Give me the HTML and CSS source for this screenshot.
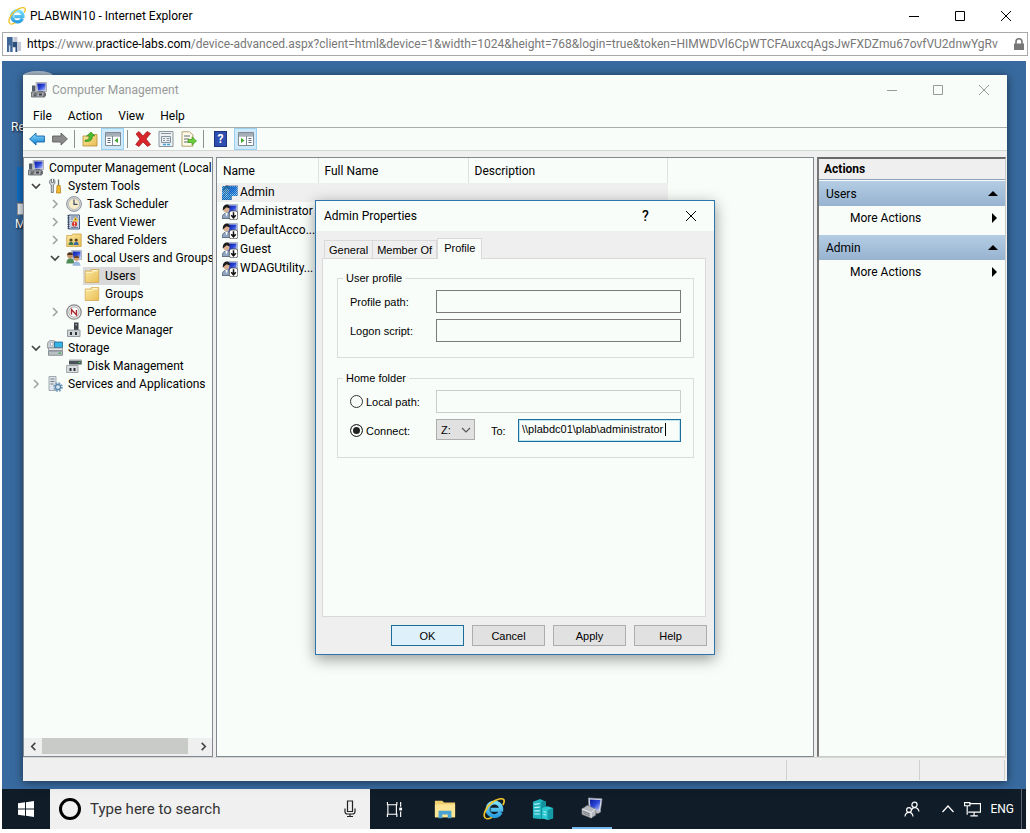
FILE: index.html
```
<!DOCTYPE html>
<html lang="en">
<head>
  <meta charset="UTF-8" />
  <meta name="viewport" content="width=device-width, initial-scale=1" />
  <title>PLABWIN10 - Internet Explorer</title>
  <link rel="stylesheet" href="styles.css">
</head>
<body>
  <!-- shared icons -->
  <svg class="sprite" aria-hidden="true">
    <defs>
      <linearGradient id="gScreen" x1="0" y1="0" x2="1" y2="1"><stop offset="0" stop-color="#0a1a9c"/><stop offset=".5" stop-color="#2b46d6"/><stop offset="1" stop-color="#b9c8ff"/></linearGradient>
      <linearGradient id="gFolder" x1="0" y1="0" x2="1" y2="1"><stop offset="0" stop-color="#fbe9a2"/><stop offset="1" stop-color="#e9bd52"/></linearGradient>
      <linearGradient id="gBlue" x1="0" y1="0" x2="0" y2="1"><stop offset="0" stop-color="#8fdcff"/><stop offset="1" stop-color="#0a7cd0"/></linearGradient>
      <linearGradient id="gCyan" x1="0" y1="0" x2="0" y2="1"><stop offset="0" stop-color="#7be0fa"/><stop offset="1" stop-color="#2a9fe0"/></linearGradient>
    </defs>
    <symbol id="i-ie" viewBox="0 0 22 22">
      <path d="M17.6 14.2A6.800 6.800 0 1 1 18.2 11.8H7.6" fill="none" stroke="url(#gCyan)" stroke-width="4"/>
      <path d="M2.6 20.4C-1 17.500 3 9 9 4.500C14 .8 19.500 -.2 20.800 1.800C21.600 3 21 5 19.800 7" fill="none" stroke="#f2c42c" stroke-width="1.700"/>
      <path d="M2.600 20.400C4.500 21.400 7 20.400 9 19.300" fill="none" stroke="#f2c42c" stroke-width="1.500"/>
    </symbol>
    <symbol id="i-computer" viewBox="0 0 16 16">
      <path d="M5 .5h10.500v9l-9.500 0z" fill="#d9d9e2" stroke="#888" stroke-width=".6"/>
      <path d="M6.200 1.500h8.300v7H7z" fill="url(#gScreen)"/>
      <path d="M1 3.500h3.500v6H1z" fill="#555d68"/>
      <path d="M8 9h4v2H8z" fill="#777"/>
      <path d="M.5 10h13v5H.5z" fill="#a9adb2" stroke="#5c6066" stroke-width=".8"/>
      <path d="M2.500 11.500h4v1h-4zM8 11.500h3v2H8zM2.500 13.300h3v1h-3z" fill="#3c4046"/>
      <path d="M12 15.400l3-1.400v-3l-2-1z" fill="#6a6e74"/>
    </symbol>
    <symbol id="i-computer-lg" viewBox="0 0 24 24">
      <path d="M8 1l15 1-2 14-12-2z" fill="#dfe3ec" stroke="#8b919d" stroke-width=".7"/>
      <path d="M9.500 2.600l11.800.8-1.500 10.800-9.300-1.500z" fill="url(#gScreen)"/>
      <path d="M10 12l4 3-1 3h6l3-2-2-1z" fill="#b4b8be"/>
      <path d="M1 13l6-4 9 4v7l-5 3-10-4z" fill="#b5b9bd" stroke="#6c7076" stroke-width=".6"/>
      <path d="M1 13l10 4 5-4M11 17v6" fill="none" stroke="#eceef0" stroke-width="1"/>
      <path d="M2.500 15.500l7 3M2.500 17.500l7 3" stroke="#6c7076" stroke-width=".9"/>
    </symbol>
    <symbol id="i-tools" viewBox="0 0 16 16">
      <path d="M4.500 1C2 2 2 6 4.300 7v7.500h2V7C8.500 6 8.500 2 6.500 1v3.500h-2z" fill="#d7dbde" stroke="#5b646b" stroke-width=".8"/>
      <path d="M11.500 1.500v6" stroke="#6a737a" stroke-width="1.300"/>
      <path d="M10 7.500h3.200l.5 7.500H9.500z" fill="#f1bb2e" stroke="#b27a10" stroke-width=".7"/>
    </symbol>
    <symbol id="i-clock" viewBox="0 0 16 16">
      <circle cx="8" cy="8" r="7.400" fill="#d9dde2" stroke="#8a8f96"/>
      <circle cx="8" cy="8" r="5.600" fill="#f7ecc8" stroke="#a5a9ae" stroke-width=".7"/>
      <path d="M8 3.500V8.300h3.500" fill="none" stroke="#3c4c66" stroke-width="1.200"/>
    </symbol>
    <symbol id="i-event" viewBox="0 0 16 16">
      <path d="M2.500 1h11v14h-11z" fill="#c7d3e2" stroke="#4d6485"/>
      <path d="M2.500 1v14" stroke="#33415a" stroke-width="2" stroke-dasharray="1.200 1"/>
      <path d="M5 5h2M5 7.500h1.500M5 13.500h7M11.500 5h1M5 3h7" stroke="#6a83a8"/>
      <path d="M9.500 2.500l3 5h-6z" fill="#f4c53a"/>
      <circle cx="8.500" cy="10" r="2.600" fill="#d5382c"/>
      <path d="M9.500 4.500v1.500" stroke="#6b4a00" stroke-width=".9"/>
      <path d="M8.500 8.500v1.800M8.500 11v.8" stroke="#fff" stroke-width=".9"/>
    </symbol>
    <symbol id="i-shared" viewBox="0 0 16 16">
      <path d="M.7 3.500h5l1-1.500h8.500V14.500H.7z" fill="url(#gFolder)" stroke="#c89b38" stroke-width=".7"/>
      <circle cx="5" cy="8" r="1.600" fill="#5a4426"/><circle cx="10.200" cy="8" r="1.600" fill="#5a4426"/>
      <path d="M2.500 13c0-4.500 5-4.500 5 0z" fill="#3a7c50"/><path d="M7.700 13c0-4.500 5-4.500 5 0z" fill="#356ca8"/>
    </symbol>
    <symbol id="i-users" viewBox="0 0 16 16">
      <path d="M5.500 .5h10v9H7z" fill="#dadfea" stroke="#8a90a0" stroke-width=".6"/>
      <path d="M6.500 1.500h8v7H7.600z" fill="url(#gScreen)"/>
      <circle cx="4" cy="5.500" r="2.800" fill="#c69164"/><path d="M1.200 5a2.800 2.800 0 0 1 5.600 0z" fill="#4b3222"/>
      <path d="M.3 13.500c0-7 8-7 8 0z" fill="#4f8b55"/>
      <circle cx="10.500" cy="8.500" r="2.500" fill="#d8a273"/><path d="M8 8a2.500 2.500 0 0 1 5 0z" fill="#6b4426"/>
      <path d="M6.500 15.700c0-5.700 8-5.700 8 0z" fill="#9ab6dc"/>
    </symbol>
    <symbol id="i-folder" viewBox="0 0 16 16">
      <path d="M1.200 3h6v-1.500h7.500V14.500H1.200z" fill="url(#gFolder)" stroke="#d0a44a" stroke-width=".7"/>
      <path d="M8.500 2.800h5" stroke="#fffbe8" stroke-width="1.200"/>
      <path d="M1.700 4.500h6l1.500-1" stroke="#fff3c4" fill="none"/>
    </symbol>
    <symbol id="i-perf" viewBox="0 0 16 16">
      <circle cx="8" cy="8" r="7.200" fill="#f4f4f4" stroke="#8a8a8a" stroke-width="1.300"/>
      <circle cx="8" cy="8" r="5.200" fill="#fff" stroke="#999" stroke-width=".8"/>
      <path d="M5.500 10.500V5.500l5 5.500V6" fill="none" stroke="#a8282d" stroke-width="1.400"/>
    </symbol>
    <symbol id="i-device" viewBox="0 0 16 16">
      <path d="M8 .5h4.500v8H8z" fill="#3d4348"/><path d="M9.500 2h1.500v1.500H9.500z" fill="#aab"/>
      <path d="M1.500 8h12.500v6.500h-12.500z" fill="#cfd3d6" stroke="#82888d" stroke-width=".8"/>
      <path d="M4 10h2v3H4zM9 10h2v3H9z" fill="#2d3236"/>
    </symbol>
    <symbol id="i-storage" viewBox="0 0 16 16">
      <path d="M.5 4c0-4.500 7-4.500 8-2v6H.5z" fill="#c9cfd4" stroke="#80878d" stroke-width=".7"/>
      <circle cx="4.800" cy="4" r="1.500" fill="#fff" stroke="#8a9298" stroke-width=".6"/>
      <path d="M7.500 2h8v5.500h-8z" fill="#35b5e6" stroke="#1c4f7c" stroke-width=".7"/>
      <path d="M1.500 8h14v2.500h-14z" fill="#e2e5e7" stroke="#80878d" stroke-width=".7"/>
      <path d="M1.500 11h14v4.300h-14z" fill="#b9c0c5" stroke="#6c7379" stroke-width=".7"/>
      <path d="M11.500 12.500h2.500v1.300h-2.500z" fill="#35b04a"/>
    </symbol>
    <symbol id="i-disk" viewBox="0 0 16 16">
      <path d="M3 2.500h12.700v4H3z" fill="#4a5156"/><path d="M3 1.500h12.700v1.300H3z" fill="#a5abb0"/>
      <path d="M12.500 4.500h2" stroke="#45d158"/>
      <path d="M.6 7.500h11.400v7H.6z" fill="#dcdfe1" stroke="#8a9095" stroke-width=".8"/>
      <path d="M3.500 10h2v3h-2zM7.500 10h2v3h-2z" fill="#2d3236"/>
    </symbol>
    <symbol id="i-services" viewBox="0 0 16 16">
      <path d="M2 .5h7v14H2z" fill="#dfe5ea" stroke="#8d979f" stroke-width=".8"/>
      <path d="M3.500 3h4M3.500 5.500h4M3.500 8h3" stroke="#6f7a83"/>
      <circle cx="11" cy="11" r="3.600" fill="none" stroke="#7ba0bf" stroke-width="2.400" stroke-dasharray="1.700 1.120"/>
      <circle cx="11" cy="11" r="2.500" fill="#dceaf5" stroke="#5f88ad" stroke-width="1.300"/>
    </symbol>
    <symbol id="i-person" viewBox="0 0 16 16">
      <path d="M5 .5h10.500v10H6z" fill="#dde2ee" stroke="#8a90a0" stroke-width=".6"/>
      <path d="M6.500 1.500h8v7.500h-8z" fill="url(#gScreen)"/>
      <circle cx="4.300" cy="5" r="3.200" fill="#d9b090"/><path d="M.8 6.500C0 -1 8.500 -1 7.700 4.500L4.500 3.200z" fill="#1d1a1c"/>
      <path d="M0 14.500c0-7.500 9.500-7.500 9.500 0z" fill="#8fa7c4" stroke="#3d4b60" stroke-width=".7"/><path d="M3.300 9l1.200 3.500L5.800 9z" fill="#fff"/>
    </symbol>
    <symbol id="i-user-off" viewBox="0 0 16 16">
      <use href="#i-person"/>
      <rect x="7.300" y="7" width="8.400" height="8.700" rx="2" fill="#fff" stroke="#333" stroke-width=".7"/>
      <path d="M11.500 8.300v5M9.200 11.300l2.300 2.500 2.300-2.500" fill="none" stroke="#111" stroke-width="1.500"/>
    </symbol>
    <pattern id="pSel" width="2" height="2" patternUnits="userSpaceOnUse"><path d="M0 0h1v1H0zM1 1h1v1H1z" fill="#0a6ec4"/></pattern>
    <symbol id="i-user-sel" viewBox="0 0 16 16">
      <use href="#i-person"/>
      <path d="M0 1h15.500v10h-5.500l-1 4H0z" fill="#58aee8" opacity=".5"/>
      <path d="M0 1h15.500v10h-5.500l-1 4H0z" fill="url(#pSel)"/>
    </symbol>
    <symbol id="i-min" viewBox="0 0 10 10"><path d="M0 5.500h10" stroke="currentColor" fill="none"/></symbol>
    <symbol id="i-max" viewBox="0 0 10 10"><path d="M.5.5h9v9h-9z" stroke="currentColor" fill="none"/></symbol>
    <symbol id="i-close" viewBox="0 0 10 10"><path d="M0 0l10 10M10 0L0 10" stroke="currentColor" fill="none"/></symbol>
    <symbol id="i-open" viewBox="0 0 10 10"><path d="M1 3l4 4 4-4" stroke="#444" stroke-width="1.700" fill="none"/></symbol>
    <symbol id="i-shut" viewBox="0 0 10 10"><path d="M3 1l4 4-4 4" stroke="#a0a0a0" stroke-width="1.500" fill="none"/></symbol>
    <symbol id="i-drop" viewBox="0 0 10 10"><path d="M1 3l4 4 4-4" stroke="#555" stroke-width="1.100" fill="none"/></symbol>
  </svg>

  <header class="titlebar">
    <svg class="ie-icon"><use href="#i-ie"/></svg>
    <h1>PLABWIN10 - Internet Explorer</h1>
    <div class="win-buttons">
      <button type="button" aria-label="Minimize"><svg><use href="#i-min"/></svg></button>
      <button type="button" aria-label="Maximize"><svg><use href="#i-max"/></svg></button>
      <button type="button" aria-label="Close"><svg><use href="#i-close"/></svg></button>
    </div>
  </header>

  <div class="address">
    <svg class="site-icon" viewBox="0 0 16 16"><path d="M0 0h6v16H0z" fill="#3f6797"/><path d="M6 5h5v11H9v-5H6z" fill="#2c4f7c"/><path d="M7 0h4v5H7zM11 5h4v10h-4z" fill="#c2c9d4"/><path d="M2 9h1.500v7H2z" fill="#c7d5e8"/></svg>
    <p class="url"><b>https</b>://www.<b>practice-labs.com</b>/device-advanced.aspx?client=html&amp;device=1&amp;width=1024&amp;height=768&amp;login=true&amp;token=HIMWDVl6CpWTCFAuxcqAgsJwFXDZmu67ovfVU2dnwYgRv</p>
    <svg class="lock" viewBox="0 0 10 13"><path d="M2 6V3.800a3 3 0 0 1 6 0V6" fill="none" stroke="#777" stroke-width="1.600"/><path d="M0 5.500h10V12H0z" fill="#777"/></svg>
  </div>

  <main class="desktop">
    <div class="shortcut bin"><span class="bin-lid"></span><span class="name">Re</span></div>
    <div class="shortcut edge"><span class="tile"></span><span class="arrow"></span><span class="name">M</span></div>

    <section class="console">
      <div class="console-title">
        <svg class="icon"><use href="#i-computer"/></svg>
        <h2>Computer Management</h2>
        <div class="win-buttons">
          <button type="button" aria-label="Minimize"><svg><use href="#i-min"/></svg></button>
          <button type="button" aria-label="Maximize"><svg><use href="#i-max"/></svg></button>
          <button type="button" aria-label="Close"><svg><use href="#i-close"/></svg></button>
        </div>
      </div>

      <nav class="menu">
        <button type="button">File</button>
        <button type="button">Action</button>
        <button type="button">View</button>
        <button type="button">Help</button>
      </nav>

      <div class="toolbar">
        <button type="button" aria-label="Back"><svg viewBox="0 0 16 16"><path d="M.6 8L7 2v3h8.400v6H7v3z" fill="url(#gBlue)" stroke="#1565a8" stroke-width=".9"/></svg></button>
        <button type="button" aria-label="Forward"><svg viewBox="0 0 16 16"><path d="M15.400 8L9 2v3H.6v6H9v3z" fill="#8b8b8b" stroke="#5e5e5e" stroke-width=".9"/></svg></button>
        <i class="sep"></i>
        <button type="button" aria-label="Up one level"><svg viewBox="0 0 16 16"><path d="M1 5h6l1-1.500h7V15H1z" fill="url(#gFolder)" stroke="#b48b35" stroke-width=".8"/><path d="M3 9c4 0 4-2 4-4H4.500L9 1l4 4h-2.500c0 4-2 6-7.500 5.500z" fill="#4cb82f" stroke="#2d7d19" stroke-width=".5"/></svg></button>
        <button type="button" class="on" aria-label="Show console tree"><svg viewBox="0 0 16 16"><path d="M.5 1.500h15v13H.5z" fill="#fff" stroke="#7f8c98"/><path d="M1 2h14v2.500H1z" fill="#a3adb6"/><path d="M7.500 5v9.500M.5 5h15" stroke="#7f8c98"/><path d="M2.500 7.500h3M2.500 9.500h3M2.500 11.500h3" stroke="#5b6874"/><path d="M13 7v5L9.500 9.500z" fill="#3ca52c"/></svg></button>
        <i class="sep"></i>
        <button type="button" aria-label="Delete"><svg viewBox="0 0 16 16"><path d="M1 3l3-2.500 4 4.500 4-4.500 3.500 2L11 8l4.500 5.500-3 2L8 11l-4 4.500-3.300-2L5 8z" fill="#d8262b" stroke="#9a1519" stroke-width=".7"/></svg></button>
        <button type="button" aria-label="Properties"><svg viewBox="0 0 16 16"><path d="M1 .5h14v15H1z" fill="#eef1f4" stroke="#8a949d"/><path d="M3 2.500h10M3.500 5.500h9v6h-9z" fill="none" stroke="#8593a0"/><path d="M5 7.500h2M8.500 7.500h3M5 9.500h2M8.500 9.500h3" stroke="#8593a0"/><path d="M5 13.500h3M9 13.500h3" stroke="#3fa0da" stroke-width="1.300"/></svg></button>
        <button type="button" aria-label="Export list"><svg viewBox="0 0 16 16"><path d="M1 .8h7.500L12 4v11.200H1z" fill="#fffbe8" stroke="#a89a68" stroke-width=".9"/><path d="M3 5h6M3 8h5M3 11h5" stroke="#5c6b78"/><path d="M7 8.500h4V5.800l4.500 4.200-4.500 4v-2.500H7z" fill="#6cce3c" stroke="#3b941d" stroke-width=".7"/></svg></button>
        <i class="sep"></i>
        <button type="button" class="help-tool" aria-label="Help"><span>?</span></button>
        <button type="button" class="on" aria-label="Show action pane"><svg viewBox="0 0 16 16"><path d="M.5 1.500h15v13H.5z" fill="#fff" stroke="#7f8c98"/><path d="M1 2h14v2.500H1z" fill="#a3adb6"/><path d="M8.500 5v9.500M.5 5h15" stroke="#7f8c98"/><path d="M10.500 7.500h3M10.500 9.500h3M10.500 11.500h3" stroke="#5b6874"/><path d="M3 7v5l3.500-2.500z" fill="#3ca52c"/></svg></button>
      </div>

      <div class="panes">
        <div class="tree-pane">
          <ul class="tree">
            <li class="root"><svg class="icon"><use href="#i-computer"/></svg><span>Computer Management (Local</span></li>
            <li><svg class="twist"><use href="#i-open"/></svg><svg class="icon"><use href="#i-tools"/></svg><span>System Tools</span></li>
            <li class="l2"><svg class="twist"><use href="#i-shut"/></svg><svg class="icon"><use href="#i-clock"/></svg><span>Task Scheduler</span></li>
            <li class="l2"><svg class="twist"><use href="#i-shut"/></svg><svg class="icon"><use href="#i-event"/></svg><span>Event Viewer</span></li>
            <li class="l2"><svg class="twist"><use href="#i-shut"/></svg><svg class="icon"><use href="#i-shared"/></svg><span>Shared Folders</span></li>
            <li class="l2"><svg class="twist"><use href="#i-open"/></svg><svg class="icon"><use href="#i-users"/></svg><span>Local Users and Groups</span></li>
            <li class="l3"><div class="leaf selected"><svg class="icon"><use href="#i-folder"/></svg><span>Users</span></div></li>
            <li class="l3"><div class="leaf"><svg class="icon"><use href="#i-folder"/></svg><span>Groups</span></div></li>
            <li class="l2"><svg class="twist"><use href="#i-shut"/></svg><svg class="icon"><use href="#i-perf"/></svg><span>Performance</span></li>
            <li class="l2"><i class="twist"></i><svg class="icon"><use href="#i-device"/></svg><span>Device Manager</span></li>
            <li><svg class="twist"><use href="#i-open"/></svg><svg class="icon"><use href="#i-storage"/></svg><span>Storage</span></li>
            <li class="l2"><i class="twist"></i><svg class="icon"><use href="#i-disk"/></svg><span>Disk Management</span></li>
            <li><svg class="twist"><use href="#i-shut"/></svg><svg class="icon"><use href="#i-services"/></svg><span>Services and Applications</span></li>
          </ul>
          <div class="scrollbar">
            <button type="button" aria-label="Scroll left"><svg viewBox="0 0 10 10"><path d="M7 1L3 5l4 4" fill="none" stroke="#444" stroke-width="1.800"/></svg></button>
            <div class="track"><div class="thumb"></div></div>
            <button type="button" aria-label="Scroll right"><svg viewBox="0 0 10 10"><path d="M3 1l4 4-4 4" fill="none" stroke="#444" stroke-width="1.800"/></svg></button>
          </div>
        </div>

        <div class="list-pane">
          <table>
            <colgroup><col class="c-name"><col class="c-col"><col class="c-desc"></colgroup>
            <thead>
              <tr><th>Name</th><th>Full Name</th><th>Description</th></tr>
            </thead>
            <tbody>
              <tr class="selected"><td><svg class="icon"><use href="#i-user-sel"/></svg>Admin</td><td></td><td></td></tr>
              <tr><td><svg class="icon"><use href="#i-user-off"/></svg>Administrator</td><td></td><td></td></tr>
              <tr><td><svg class="icon"><use href="#i-user-off"/></svg>DefaultAcco...</td><td></td><td></td></tr>
              <tr><td><svg class="icon"><use href="#i-user-off"/></svg>Guest</td><td></td><td></td></tr>
              <tr><td><svg class="icon"><use href="#i-user-off"/></svg>WDAGUtility...</td><td></td><td></td></tr>
            </tbody>
          </table>
        </div>

        <aside class="actions-pane">
          <h3>Actions</h3>
          <button type="button" class="group">Users<i class="up"></i></button>
          <button type="button" class="more">More Actions<i class="right"></i></button>
          <button type="button" class="group">Admin<i class="up"></i></button>
          <button type="button" class="more">More Actions<i class="right"></i></button>
        </aside>
      </div>

      <div class="status"><span></span><span></span><span></span></div>
    </section>

    <form class="dialog">
      <div class="dialog-title">
        <h2>Admin Properties</h2>
        <button type="button" class="what" aria-label="Help">?</button>
        <button type="button" aria-label="Close"><svg><use href="#i-close"/></svg></button>
      </div>
      <div class="tabs">
        <button type="button">General</button>
        <button type="button">Member Of</button>
        <button type="button" class="active">Profile</button>
      </div>
      <div class="sheet">
        <fieldset>
          <legend>User profile</legend>
          <div class="row"><label for="profilePath">Profile path:</label><input type="text" id="profilePath"></div>
          <div class="row"><label for="logonScript">Logon script:</label><input type="text" id="logonScript"></div>
        </fieldset>
        <fieldset>
          <legend>Home folder</legend>
          <div class="row"><label><input type="radio" name="home">Local path:</label><input type="text" aria-label="Local path" disabled></div>
          <div class="row">
            <label><input type="radio" name="home" checked>Connect:</label>
            <div class="drive">
              <select aria-label="Drive"><option>Z:</option></select>
              <svg><use href="#i-drop"/></svg>
            </div>
            <label for="connectTo" class="to">To:</label>
            <div class="focused">
              <input type="text" id="connectTo" value="\\plabdc01\plab\administrator">
              <i class="caret"></i>
            </div>
          </div>
        </fieldset>
      </div>
      <div class="dialog-buttons">
        <button type="submit" class="default">OK</button>
        <button type="button">Cancel</button>
        <button type="button">Apply</button>
        <button type="button">Help</button>
      </div>
    </form>

    <footer class="taskbar">
      <button type="button" class="start" aria-label="Start"><svg viewBox="0 0 16 16"><path d="M0 2.300L7 1.300v6.200H0zM8 1.200L16 0v7.500H8zM0 8.500h7v6.200l-7-1zM8 8.500h8V16l-8-1.200z" fill="#fff"/></svg></button>
      <div class="search">
        <span class="ring"></span>
        <input type="text" placeholder="Type here to search" aria-label="Search">
        <svg class="mic" viewBox="0 0 12 18"><path d="M3.500 1h5v10.500h-5zM1 8.500v3c0 2 1 2.500 2.500 2.500h5c1.500 0 2.500-.5 2.500-2.500v-3M6 14v2.500M3 16.500h6" fill="none" stroke="#222" stroke-width="1.200"/></svg>
      </div>
      <button type="button" class="task-view" aria-label="Task View"><svg viewBox="0 0 18 18"><path d="M1.500 1v3h10V1M1.500 17v-3h10v3M2 4v10M11 4v10M15.500 1v5M15.500 11v6" fill="none" stroke="#fff" stroke-width="1.200"/><path d="M14 7h3v3h-3z" fill="#fff"/></svg></button>
      <button type="button" class="app" aria-label="File Explorer"><svg viewBox="0 0 24 24"><path d="M1 3h8l2 2h12v16H1z" fill="#f0cf6c"/><path d="M1 7h22v14H1z" fill="#fde596"/><path d="M5 22v-8h14v8h-4v-4H9v4z" fill="#4aa3d2"/></svg></button>
      <button type="button" class="app" aria-label="Internet Explorer"><svg><use href="#i-ie"/></svg></button>
      <button type="button" class="app" aria-label="Server Manager"><svg viewBox="0 0 24 24"><path d="M1 4l8-3 6 3v18l-6 1-8-1z" fill="#20b5c0"/><path d="M10 4l5-1v19h-5z" fill="#12909c"/><path d="M2.500 7l6-1M2.500 10.500l6-.5M2.500 14h6M2.500 17.500h6" stroke="#bdf3f5" stroke-width="1.200"/><path d="M11 11l6-2 6 2v11l-6 2-6-2z" fill="#2cc9d2"/><path d="M17 13l6-2v11l-6 2z" fill="#149ba6"/><path d="M12.500 15l3 .5M12.500 18l3 .5" stroke="#d2fafa"/></svg></button>
      <button type="button" class="app running" aria-label="Computer Management"><svg><use href="#i-computer-lg"/></svg></button>
      <div class="tray">
        <svg class="people" viewBox="0 0 16 16"><g fill="none" stroke="#fff" stroke-width="1.200"><circle cx="10.500" cy="3.800" r="2.600"/><path d="M7.500 9c1-3.500 6.500-3.500 7.500 1.500"/><circle cx="5" cy="9" r="2.400"/><path d="M1 15.500c.5-5.500 7.500-5.500 8 0"/></g></svg>
        <svg class="chev" viewBox="0 0 12 12"><path d="M.5 9L6 3l5.500 6" fill="none" stroke="#fff" stroke-width="1.200"/></svg>
        <svg class="net" viewBox="0 0 16 16"><path d="M5 2.500h10.500v8H4M9.500 10.500v3M6 14h7M.5 1.500h5v3h-5zM3 4.500v8.500" fill="none" stroke="#fff" stroke-width="1.100"/></svg>
        <span class="lang">ENG</span>
      </div>
    </footer>
  </main>
</body>
</html>
```
FILE: styles.css
```
* { box-sizing: border-box; }
body { margin: 0; min-height: 100vh; padding-bottom: 4px; display: flex; flex-direction: column; background: #fff; color: #000; font-family: Roboto, "Open Sans", sans-serif; font-size: 12px; line-height: 18px; }
h1, h2, h3, p, ul { margin: 0; padding: 0; font-size: 12px; font-weight: normal; list-style: none; }
button { margin: 0; padding: 0; border: none; background: none; color: inherit; font: inherit; }
.sprite { position: absolute; width: 0; height: 0; }
.icon { width: 16px; height: 16px; flex: none; }

/* browser frame */
.titlebar { display: flex; align-items: center; height: 32px; padding: 0 1px 0 8px; }
.titlebar h1 { flex: 1; padding-left: 4px; }
.ie-icon { width: 18px; height: 18px; }
.win-buttons { display: flex; }
.win-buttons button { width: 46px; height: 30px; display: flex; align-items: center; justify-content: center; }
.win-buttons svg { width: 10px; height: 10px; }
.address { display: flex; align-items: center; height: 24px; margin: 0 2px; padding: 0 3px 0 4px; border: 1px solid #aaa; }
.address .site-icon { width: 15px; height: 15px; margin-right: 5px; flex: none; }
.address .url { flex: 1; min-width: 0; overflow: hidden; white-space: nowrap; color: #777; }
.address b { color: #000; font-weight: normal; }
.address .lock { width: 10px; height: 13px; margin-left: 7px; flex: none; }

/* remote desktop */
.desktop { position: relative; z-index: 0; flex: 1; display: flex; flex-direction: column; margin: 5px 4px 0 2px; background: #386a9f; }
.shortcut { position: absolute; left: 9px; color: #fff; text-shadow: 1px 1px 2px #000; white-space: nowrap; }
.shortcut.bin { top: 10px; }
.shortcut.bin .bin-lid { display: block; width: 30px; height: 10px; margin: 0 12px 37px; border-radius: 50%; background: #aebfd0; }
.shortcut.edge { top: 106px; left: 13px; }
.shortcut.edge .tile { display: block; width: 32px; height: 34px; margin: 0 2px; background: #0f6fc6; }
.shortcut.edge .arrow { display: block; width: 12px; height: 12px; margin: 2px 2px 0; border: 1px solid #999; background: #e8eef5; }

.console { position: relative; flex: 1; display: flex; flex-direction: column; margin: 14px 19px 8px 21px; background: #efefef; box-shadow: 0 1px 9px rgba(0,0,0,0.55); }
.console-title { display: flex; align-items: center; height: 30px; padding-left: 8px; background: #f8fdf9; color: #999; }
.console-title h2 { flex: 1; padding-left: 5px; }
.menu { display: flex; height: 23px; padding: 0 2px; background: #f8fdf9; border-bottom: 1px solid #a9adaa; }
.menu button { padding: 0 8px; }
.toolbar { display: flex; align-items: center; height: 23px; padding: 0 2px; background: #f8fdf9; border-bottom: 1px solid #d4d8d5; }
.toolbar button { width: 23px; height: 22px; display: flex; align-items: center; justify-content: center; }
.toolbar svg { width: 16px; height: 16px; }
.toolbar .on { background: #cde8f8; border: 1px solid #9bd0f0; }
.toolbar .sep { width: 1px; height: 18px; margin: 0 3px; background: #8d918e; }
.toolbar .help-tool { width: 27px; }
.help-tool span { width: 13px; height: 16px; background: #2f4fb0; border: 1px solid #1c3480; color: #fff; font-weight: bold; line-height: 14px; }
.panes { flex: 1; display: flex; gap: 3px; min-height: 0; margin-top: 6px; }

/* console tree */
.tree-pane { width: 190px; flex: none; display: flex; flex-direction: column; border: 1px solid #828790; background: #f8fdf9; overflow: hidden; }
.tree { flex: 1; padding: 1px 0 0 4px; }
.tree li { display: flex; align-items: center; height: 18px; white-space: nowrap; }
.tree span { padding-left: 5px; }
.tree .twist { width: 10px; height: 10px; margin: 0 6px 0 3px; flex: none; }
.tree .l2 { padding-left: 19px; }
.tree .l3 { padding-left: 55px; }
.leaf { display: flex; align-items: center; padding: 0 4px 0 1px; }
.leaf.selected { background: #d9d9d9; }
.scrollbar { display: flex; height: 18px; padding-bottom: 2px; background: #efefef; }
.scrollbar button { width: 18px; display: flex; align-items: center; justify-content: center; }
.scrollbar svg { width: 9px; height: 9px; }
.track { flex: 1; }
.thumb { width: 96%; height: 100%; background: #c8cbc8; }

/* user list */
.list-pane { flex: 1; min-width: 0; border: 1px solid #828790; background: #f8fdf9; }
.list-pane table { width: 451px; table-layout: fixed; border-collapse: collapse; }
.list-pane .c-name { width: 101px; }
.list-pane .c-col { width: 150px; }
.list-pane th { height: 25px; padding: 0 6px; border-right: 1px solid #dfe3e0; font-weight: normal; text-align: left; }
.list-pane td { height: 19px; padding: 0 0 0 5px; line-height: 19px; white-space: nowrap; }
.list-pane td .icon { margin-right: 2px; vertical-align: middle; }
.list-pane .selected { background: #efefef; }

/* actions */
.actions-pane { width: 189px; flex: none; margin-right: 1px; border: 1px solid #c8ccc9; border-top: 2px solid #696969; border-left: 2px solid #777; background: #f8fdf9; }
.actions-pane h3 { height: 21px; margin-bottom: 1px; padding-left: 5px; border-bottom: 1px solid #8ba0b4; background: #efefef; font-weight: bold; line-height: 21px; }
.actions-pane button { display: flex; align-items: center; justify-content: space-between; width: 100%; }
.actions-pane .group { height: 25px; padding: 0 7px; background: linear-gradient(#b4cde4, #97b3d0); }
.actions-pane .more { height: 24px; padding: 0 8px 0 31px; margin-bottom: 5px; }
.up { border: 5px solid transparent; border-top: none; border-bottom-color: #000; }
.right { border: 5px solid transparent; border-right: none; border-left-color: #000; }

.status { display: flex; justify-content: flex-end; height: 24px; padding: 2px 2px 1px; border-top: 1px solid #d4d8d5; }
.status span { width: 133px; border-left: 1px solid #cdd1ce; }
.status span:last-child { width: 86px; border-right: 1px solid #cdd1ce; }
.status span:first-child { flex: 1; border: none; }

/* properties dialog */
.dialog { position: absolute; left: 313px; top: 139px; width: 400px; padding: 0 8px 8px 6px; border: 1px solid #2e75ae; background: #efefef; box-shadow: 0 4px 14px rgba(0,0,0,0.4); font: 11px/16px "Liberation Sans", Arial, sans-serif; }
.dialog-title { display: flex; align-items: center; height: 30px; margin: 0 -8px 0 -6px; padding: 0 1px 0 8px; background: #f8fdf9; font: 12px/18px Roboto, "Open Sans", sans-serif; }
.dialog-title h2 { flex: 1; }
.dialog-title button { width: 45px; height: 29px; display: flex; align-items: center; justify-content: center; }
.dialog-title svg { width: 10px; height: 10px; }
.dialog-title .what { font-size: 14px; font-weight: 500; }
.tabs { position: relative; display: flex; align-items: flex-end; height: 27px; padding-left: 2px; }
.tabs button { height: 18px; padding: 0 4px; border: 1px solid #d9d9d9; border-bottom: none; }
.tabs button + button { border-left: none; }
.tabs .active { height: 21px; margin-bottom: -1px; padding: 0 6px 2px; background: #f8fdf9; }
.tabs .active { border-left: 1px solid #d9d9d9; }
.sheet { height: 359px; padding: 11px 11px 0 14px; border: 1px solid #d9d9d9; background: #f8fdf9; }
fieldset { height: 88px; min-width: 0; margin: 0 0 12px; padding: 4px 12px 0; border: 1px solid #d9dcda; }
legend { margin-left: -7px; padding: 0 3px; }
.row { display: flex; align-items: center; height: 23px; margin-bottom: 6px; }
.row > label:first-child { width: 86px; flex: none; display: flex; align-items: center; }
.dialog input[type="text"] { flex: 1; min-width: 0; height: 23px; padding: 0 3px 3px; border: 1px solid #7a7a7a; background: #f8fdf9; font: inherit; }
.dialog input[type="text"]:disabled { border-color: #ccc; }
.dialog input[type="radio"] { appearance: none; width: 13px; height: 13px; margin: 0 3px 0 0; border: 1px solid #333; border-radius: 50%; background: #f8fdf9; }
.dialog input[type="radio"]:checked { background: #222; box-shadow: inset 0 0 0 2px #f8fdf9; }
.drive { position: relative; align-self: flex-start; width: 39px; height: 21px; }
.drive select { appearance: none; width: 100%; height: 100%; padding: 0 4px; border: 1px solid #adadad; border-radius: 0; background: #e1e1e1; color: #000; font: inherit; }
.drive svg { position: absolute; right: 4px; top: 6px; width: 10px; height: 10px; pointer-events: none; }
.row .to { width: 43px; padding-left: 16px; }
.focused { position: relative; flex: 1; display: flex; }
.dialog .focused input { border: 1px solid #1c6d98; box-shadow: inset 0 0 0 1px #bfe4f2; }
.caret { position: absolute; left: 147px; top: 4px; width: 1px; height: 13px; background: #000; }
.dialog-buttons { display: flex; justify-content: flex-end; gap: 8px; margin: 8px -1px 0 0; }
.dialog-buttons button { width: 73px; height: 21px; border: 1px solid #adadad; background: #e1e1e1; }
.dialog-buttons .default { border-color: #1c6d98; background: #def0fa; }

/* taskbar */
.taskbar { display: flex; height: 40px; background: #101c27; color: #fff; }
.taskbar button { width: 49px; display: flex; align-items: center; justify-content: center; }
.taskbar button svg { width: 22px; height: 22px; }
.taskbar .start { width: 48px; }
.taskbar .start svg { width: 16px; height: 16px; }
.taskbar .task-view svg { width: 17px; height: 17px; }
.taskbar .task-view { margin-right: 1px; }
.taskbar .running { width: 40px; margin-left: 5px; border-bottom: 2px solid #76b9ed; }
.search { display: flex; align-items: center; width: 320px; padding: 0 14px 0 9px; background: #f0f0f0; }
.search .ring { width: 22px; height: 22px; border: 3px solid #000; border-radius: 50%; }
.search input { flex: 1; min-width: 0; padding: 0 0 0 9px; border: none; outline: none; background: none; font: 15px/20px Roboto, "Open Sans", sans-serif; }
.search input::placeholder { color: #333; opacity: 1; }
.search .mic { width: 12px; height: 18px; }
.tray { display: flex; align-items: center; margin-left: auto; margin-right: 4px; padding-right: 7px; border-right: 1px solid #5b646c; }
.tray .people { width: 16px; height: 16px; margin-right: 22px; }
.tray .chev { width: 12px; height: 12px; margin-right: 10px; }
.tray .net { width: 17px; height: 17px; margin-right: 9px; }
```
